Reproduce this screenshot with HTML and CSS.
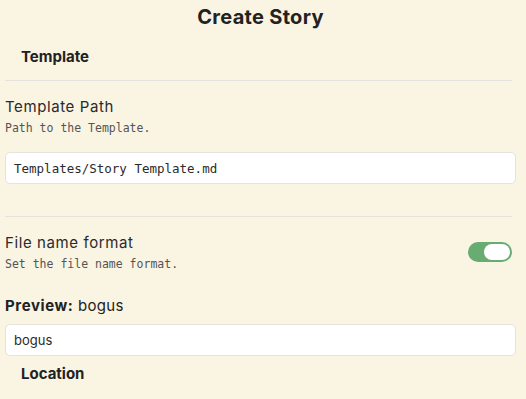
FILE: index.html
```html
<!DOCTYPE html>
<html lang="en">
<head>
    <meta charset="UTF-8">
    <title>Create Story</title>
    <link rel="stylesheet" href="styles.css">
</head>
<body>
    <div class="modal">
        <h1 class="title">Create Story</h1>
        <h3 class="group-heading">Template</h3>
        <div class="setting">
            <div class="setting-info">
                <div class="setting-name">Template Path</div>
                <div class="setting-desc">Path to the Template.</div>
            </div>
        </div>
        <input class="text-input mono" type="text" value="Templates/Story Template.md">
        <div class="setting bordered">
            <div class="setting-info">
                <div class="setting-name">File name format</div>
                <div class="setting-desc">Set the file name format.</div>
            </div>
            <div class="toggle"><div class="knob"></div></div>
        </div>
        <div class="preview"><b>Preview:</b> bogus</div>
        <input class="text-input" type="text" value="bogus">
        <h3 class="group-heading loc">Location</h3>
    </div>
</body>
</html>
```

FILE: styles.css
```css
body {
    margin: 0;
    background: #faf4e2;
    color: #222;
    font-family: Inter, "Noto Sans", sans-serif;
}

.modal {
    padding: 0 10px 0 5px;
}

.title {
    margin: 0;
    padding-top: 5px;
    text-align: center;
    font-size: 20px;
    font-weight: 700;
    line-height: 24px;
    letter-spacing: 0.3px;
}

.group-heading {
    margin: 0;
    padding: 18px 0 0 16px;
    font-size: 15px;
    font-weight: 700;
    line-height: 20px;
}

.setting {
    display: flex;
    align-items: center;
    border-top: 1px solid #e3e2dc;
    margin-top: 13px;
    padding-top: 16px;
    margin-right: 4px;
}

.setting-info {
    flex: 1;
}

.setting-name {
    font-size: 15px;
    line-height: 20px;
    letter-spacing: 0.6px;
    color: #2a2a2a;
}

.setting-desc {
    margin-top: 3px;
    font-family: "DejaVu Sans Mono", monospace;
    font-size: 11.5px;
    line-height: 16px;
    color: #555;
}

.text-input {
    display: block;
    box-sizing: border-box;
    width: 100%;
    height: 32px;
    margin-top: 16px;
    padding: 0 8px;
    border: 1px solid #e6e3dc;
    border-radius: 5px;
    background: #fff;
    color: #2a2a2a;
    font-family: Inter, sans-serif;
    font-size: 13px;
}

.mono {
    font-family: "DejaVu Sans Mono", monospace;
    font-size: 12.5px;
}

.bordered {
    margin-top: 32px;
}

.toggle {
    width: 44px;
    height: 20px;
    border-radius: 10px;
    background: #68ac72;
    display: flex;
    align-items: center;
    justify-content: flex-end;
    padding: 0 2px;
    box-sizing: border-box;
    margin-top: -2px;
}

.knob {
    width: 26px;
    height: 16px;
    border-radius: 8px;
    background: #fff;
}

.preview {
    margin-top: 24px;
    font-size: 15px;
    line-height: 20px;
    letter-spacing: 0.3px;
}

.preview b {
    letter-spacing: 0.6px;
}

.preview + .text-input {
    margin-top: 8px;
}

.loc {
    padding-top: 8px;
}
```
